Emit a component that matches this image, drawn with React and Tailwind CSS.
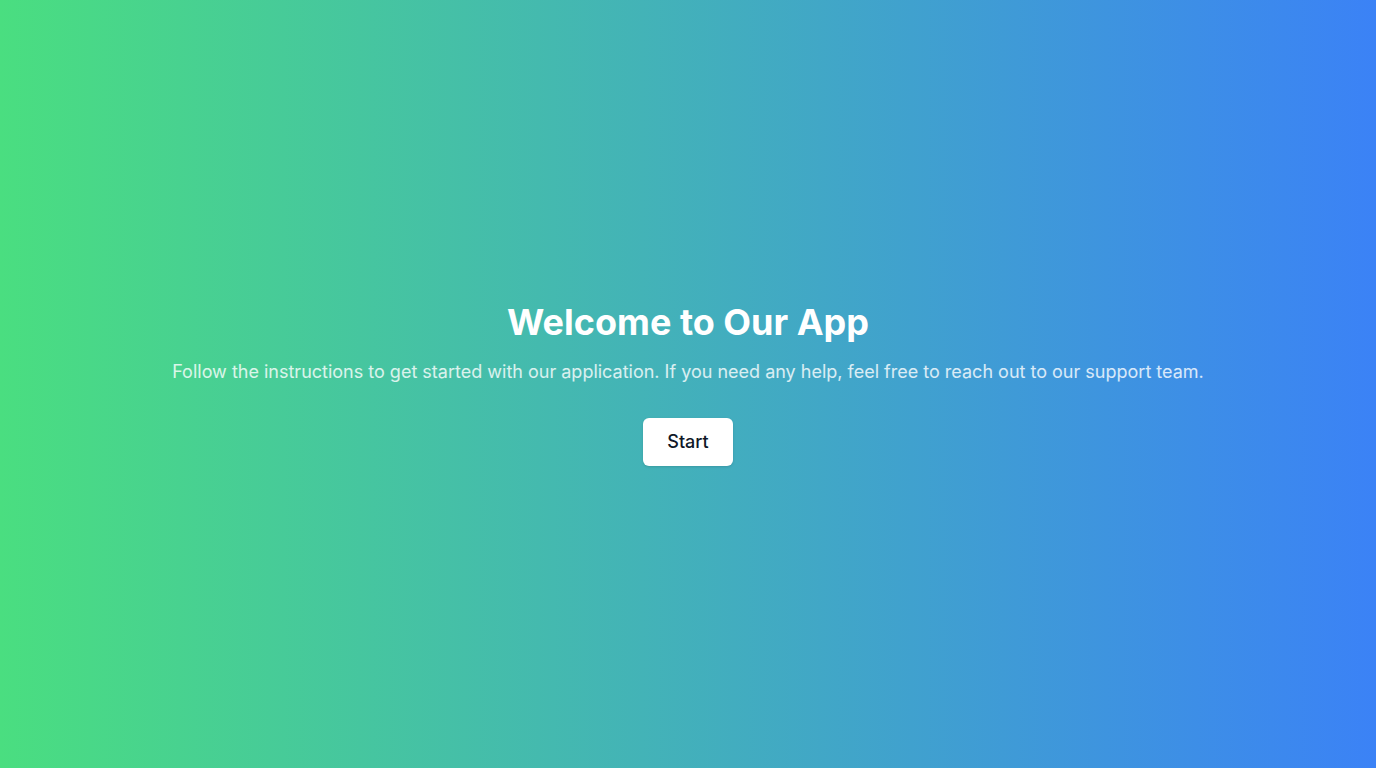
export default function App() {
  return (
    <main
      className="flex min-h-screen flex-col items-center justify-center bg-[linear-gradient(to_right,#4ade80,#3b82f6)] px-4 text-center"
      style={{ fontFamily: 'Inter, "Noto Sans", sans-serif' }}
    >
      <h1 className="mb-4 text-4xl font-bold text-white">Welcome to Our App</h1>
      <p className="mb-8 text-lg text-white/80">
        Follow the instructions to get started with our application. If you need any help, feel free to reach out to our support team.
      </p>
      <button className="rounded-md bg-white px-6 py-2.5 text-lg font-medium text-gray-900 shadow hover:bg-gray-100">
        Start
      </button>
    </main>
  )
}
